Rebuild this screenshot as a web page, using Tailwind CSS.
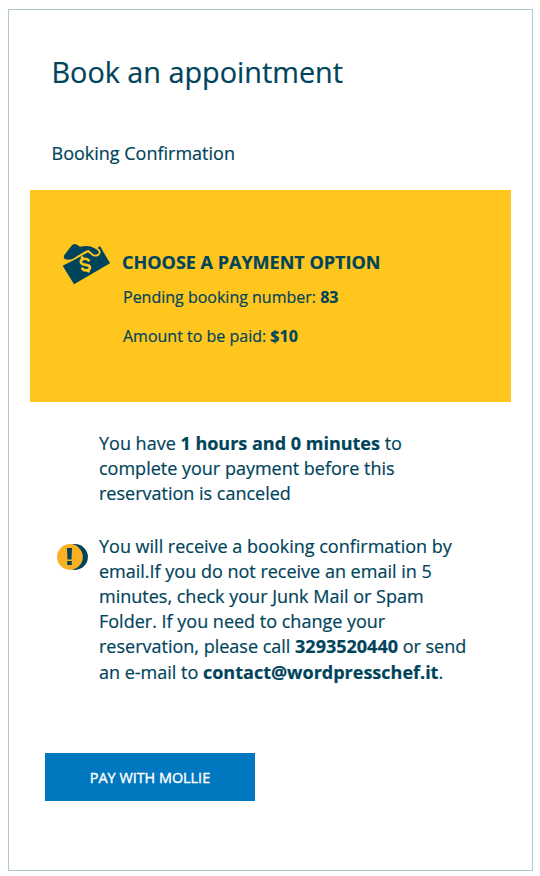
<!DOCTYPE html>
<html lang="en">
<head>
<meta charset="utf-8">
<title>Book an appointment</title>
<script src="https://cdn.jsdelivr.net/npm/@tailwindcss/browser@4"></script>
</head>
<body class="bg-white font-['Open_Sans','Noto_Sans',sans-serif] text-[#00445b] [-webkit-text-stroke:0.2px_currentColor]">
<main class="ml-2 mt-[9px] flex h-[862px] w-[525px] flex-col border border-[#b2c5cc] px-[21px]">
  <h1 class="mt-[42px] pl-[21.5px] text-[28.8px] leading-[40px]">Book an appointment</h1>
  <h2 class="mt-[49px] pl-[21.5px] text-[18px] leading-[25px]">Booking Confirmation</h2>
  <section class="mt-6 flex h-[212px] w-[481px] shrink-0 bg-[#ffc61e] pl-8 pt-[53px]">
    <svg class="h-[42px] w-12 shrink-0" viewBox="0 0 144 126" aria-hidden="true">
      <path fill="#00445b" d="M2 68 36 51 78 28 92 39Q102 43 110 38Q119 30 114 20L107 15 114 9 144 61 36 124Z"/>
      <path fill="#00445b" d="M5 45 7 36 28 9Q36-1 46 6L54 11Q74 7 88 11L103 19Q112 24 110 31Q104 38 94 34L80 21 72 23 42 41Q33 50 20 50L10 49Z"/>
      <path fill="none" stroke="#ffc61e" stroke-width="8" stroke-linecap="round" d="M80 52C70 43 54 48 57 59C60 69 84 62 84 73C84 82 68 86 61 77M62 47 60 43M78 81 80 85"/>
    </svg>
    <div class="ml-3">
      <h3 class="mt-[6px] text-[18px] font-bold leading-[26px]">CHOOSE A PAYMENT OPTION</h3>
      <p class="ml-px mt-[11px] text-[16px] leading-[22px]">Pending booking number: <b>83</b></p>
      <p class="ml-px mt-[17px] text-[16px] leading-[22px]">Amount to be paid: <b>$10</b></p>
    </div>
  </section>
  <section class="ml-[69px] mt-[29px] text-[18px] leading-[25.2px]">
    <p>You have <b>1 hours and 0 minutes</b> to<br>complete your payment before this<br>reservation is canceled</p>
  </section>
  <section class="ml-[27px] mt-[27px] flex text-[18px] leading-[25.2px]">
    <svg class="mt-[9px] h-7 w-8 shrink-0" viewBox="0 0 32 28" aria-hidden="true">
      <circle cx="18" cy="14" r="12.9" fill="#00445b"/>
      <circle cx="12.9" cy="14" r="12.9" fill="#f9b123"/>
      <path fill="#00445b" d="M10 5h5l-.5 11.5h-4ZM10.2 18h4.6v4h-4.6Z"/>
    </svg>
    <p class="ml-[10px] whitespace-nowrap">You will receive a booking confirmation by<br>email.If you do not receive an email in 5<br>minutes, check your Junk Mail or Spam<br>Folder. If you need to change your<br>reservation, please call <b>3293520440</b> or send<br>an e-mail to <b>contact@wordpresschef.it</b>.</p>
  </section>
  <button class="ml-[15px] mt-[68px] h-12 w-[210px] shrink-0 bg-[#0077be] pt-[2px] text-[14.4px] leading-5 text-white [-webkit-text-stroke:0.4px_currentColor]">PAY WITH MOLLIE</button>
</main>
</body>
</html>
